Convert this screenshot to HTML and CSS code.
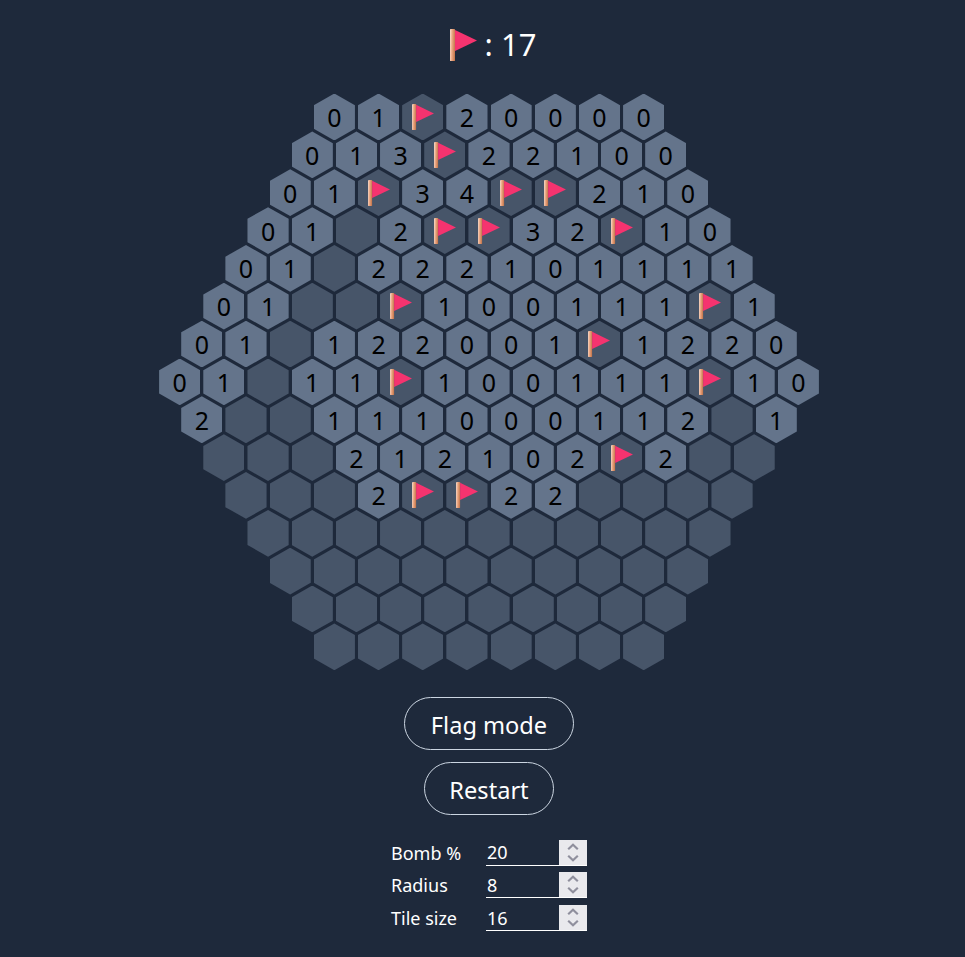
FILE: index.html
```html
<!DOCTYPE html>
<html lang="en">
<head>
    <meta charset="UTF-8">
    <meta name="viewport" content="width=device-width, initial-scale=1.0">
    <title>Hex Minesweeper</title>
    <link rel="stylesheet" href="styles.css">
</head>
<body>
    <svg class="sprites" width="0" height="0">
        <defs>
            <linearGradient id="pole" x1="0" y1="0" x2="1" y2="0.12">
                <stop offset="0" stop-color="#fbe0d0"/>
                <stop offset="0.45" stop-color="#eca782"/>
                <stop offset="1" stop-color="#c67a50"/>
            </linearGradient>
            <symbol id="flag" viewBox="0 0 27 32">
                <rect x="0" y="0" width="5" height="32" rx="0.6" fill="url(#pole)"/>
                <path d="M5 1 L27 11.6 L5 22 Z" fill="#f5336f"/>
            </symbol>
            <symbol id="chevrons" viewBox="0 0 28 25">
                <path d="M9.2 9.2 L14 4.8 L18.8 9.2" fill="none" stroke="#8f8f9d" stroke-width="2.2"/>
                <path d="M9.2 15.8 L14 20.2 L18.8 15.8" fill="none" stroke="#8f8f9d" stroke-width="2.2"/>
            </symbol>
        </defs>
    </svg>

    <div class="container">
        <h1 class="counter">
            <svg class="flag-big"><use href="#flag"/></svg>
            <span>: 17</span>
        </h1>

        <div class="board" id="board"></div>

        <button class="btn btn-flag">Flag mode</button>
        <button class="btn btn-restart">Restart</button>

        <div class="settings">
            <div class="setting">
                <label for="bomb-pct">Bomb %</label>
                <div class="field">
                    <input type="number" id="bomb-pct" value="20">
                    <svg class="spin"><use href="#chevrons"/></svg>
                </div>
            </div>
            <div class="setting">
                <label for="radius">Radius</label>
                <div class="field">
                    <input type="number" id="radius" value="8">
                    <svg class="spin"><use href="#chevrons"/></svg>
                </div>
            </div>
            <div class="setting">
                <label for="tile-size">Tile size</label>
                <div class="field">
                    <input type="number" id="tile-size" value="16">
                    <svg class="spin"><use href="#chevrons"/></svg>
                </div>
            </div>
        </div>
    </div>

    <script src="game.js"></script>
</body>
</html>
```

FILE: styles.css
```css
* {
    box-sizing: border-box;
}
body {
    margin: 0;
    padding-left: 13px;
    background-color: #1e293b;
    color: white;
    font-family: 'Noto Sans', 'Open Sans', sans-serif;
}
.sprites {
    position: absolute;
}
.container {
    display: flex;
    flex-direction: column;
    align-items: center;
    padding-top: 21px;
}
.counter {
    display: flex;
    align-items: center;
    gap: 8px;
    height: 48px;
    margin: 0 0 24px 8px;
    font-size: 31px;
    font-weight: 400;
}
.counter span {
    margin-top: -2px;
}
.flag-big {
    width: 27px;
    height: 32px;
}
.board {
    display: flex;
    flex-direction: column;
    align-items: center;
    margin-bottom: 26px;
}
.row {
    display: flex;
    gap: 3px;
    height: 37.85px;
}
.row:last-child {
    height: 48px;
}
.tile {
    display: flex;
    align-items: center;
    justify-content: center;
    width: 41.2px;
    height: 46.8px;
    margin-top: 0.6px;
    flex-shrink: 0;
    background-color: #64748b;
    clip-path: polygon(50% 0, 100% 25%, 100% 75%, 50% 100%, 0 75%, 0 25%);
    color: #000;
    font-size: 25px;
}
.tile.hidden {
    background-color: #475569;
}
.tile svg {
    width: 22px;
    height: 26px;
}
.btn {
    display: block;
    height: 53px;
    margin-bottom: 12px;
    padding: 3px 0 0;
    background: none;
    border: 1px solid #cbd5e1;
    border-radius: 27px;
    color: white;
    font-family: inherit;
    font-size: 23.6px;
}
.btn-flag {
    width: 170px;
}
.btn-restart {
    width: 130px;
}
.settings {
    margin-top: 13px;
}
.setting {
    display: flex;
    align-items: flex-start;
    height: 32.6px;
    font-size: 18px;
}
.setting label {
    width: 95px;
    line-height: 26px;
}
.field {
    display: flex;
    width: 101px;
    height: 26px;
    border-bottom: 1px solid white;
}
.field input {
    width: 73px;
    padding: 0 1px;
    background: none;
    border: none;
    color: white;
    font-family: inherit;
    font-size: 18px;
    -moz-appearance: textfield;
}
.field input::-webkit-inner-spin-button,
.field input::-webkit-outer-spin-button {
    -webkit-appearance: none;
    margin: 0;
}
.spin {
    width: 28px;
    height: 25px;
    background-color: #e9e9ed;
}
```

FILE: game.js
```js
// F = flag, _ = not opened yet, digits = opened
const rows = [
    '01F20000',
    '013F22100',
    '01F34FF210',
    '01_2FF32F10',
    '01_222101111',
    '01__F100111F1',
    '01_122001F1220',
    '01_11F100111F10',
    '2__111000112_1',
    '___212102F2__',
    '___2FF22____',
    '___________',
    '__________',
    '_________',
    '________'
];

const board = document.getElementById('board');

rows.forEach(function (row) {
    const rowEl = document.createElement('div');
    rowEl.className = 'row';
    for (const cell of row) {
        const tile = document.createElement('div');
        tile.className = 'tile';
        if (cell === 'F') {
            tile.classList.add('hidden');
            tile.innerHTML = '<svg><use href="#flag"/></svg>';
        } else if (cell === '_') {
            tile.classList.add('hidden');
        } else {
            tile.textContent = cell;
        }
        rowEl.appendChild(tile);
    }
    board.appendChild(rowEl);
});
```
